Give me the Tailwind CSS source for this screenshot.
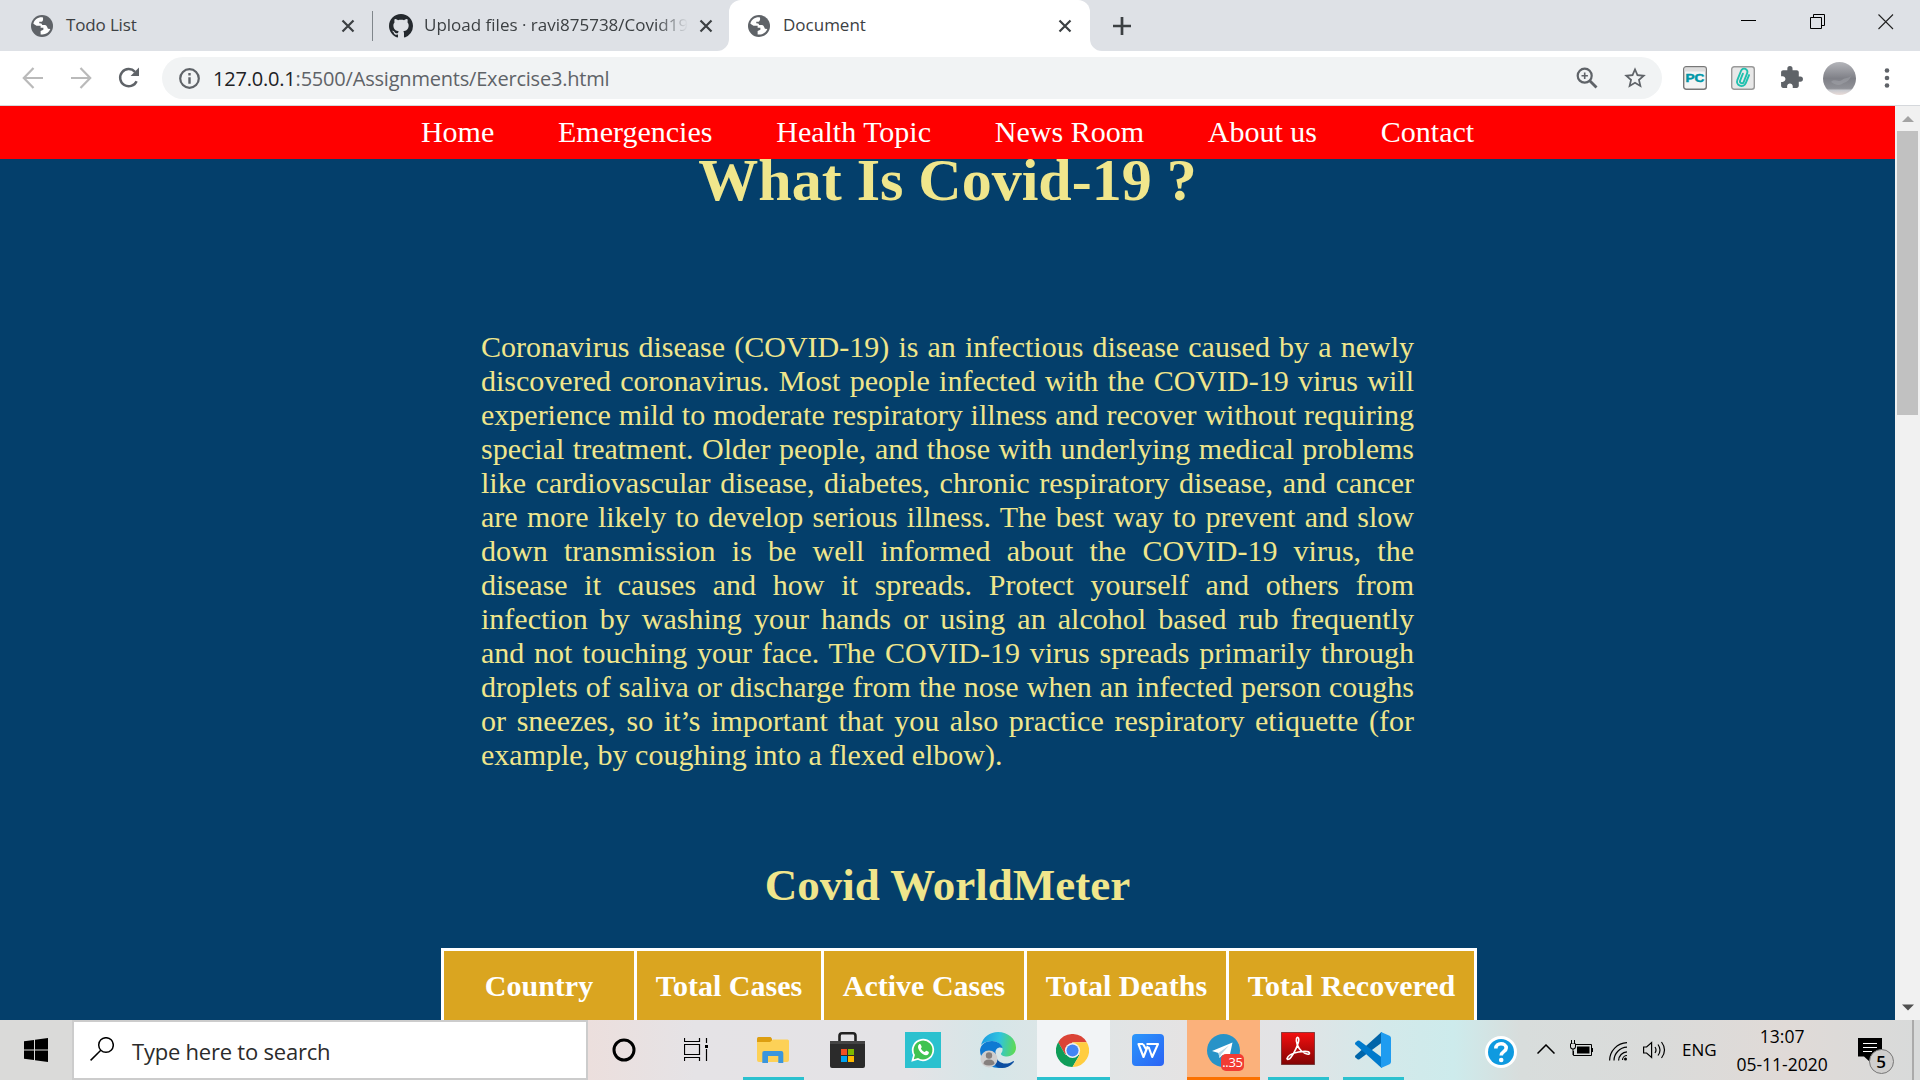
<!DOCTYPE html>
<html lang="en">
<head>
<meta charset="utf-8">
<title>Document</title>
<script src="https://cdn.jsdelivr.net/npm/@tailwindcss/browser@4"></script>
</head>
<body class="w-[1920px] h-[1080px] overflow-hidden flex flex-col bg-white font-['Open_Sans','Noto_Sans',sans-serif]">
<svg class="hidden">
  <symbol id="globe" viewBox="0 0 24 24"><circle cx="12" cy="12" r="12" fill="#5f6368"/><path d="M13 2.600C8 2 3.600 4.800 2.600 9.600L6 11.600h4.500v2.200h3v2.400l-3 1.200v3.800c5 .8 9-1.600 10.600-5.800l-2.600-.4c-1-1.800-1-3.400-3.200-4l-3-.2-1-1.600-2.300-.2V7.400h2.600c1.400-.6 2-2.800 1.400-4.800z" fill="#fff"/></symbol>
  <symbol id="close" viewBox="0 0 14 14"><path d="M1.500 1.500l11 11M12.500 1.500l-11 11" stroke="#3c4043" stroke-width="2.200"/></symbol>
</svg>

<header class="h-[51px] shrink-0 flex bg-[#dee1e6] text-[17px] text-[#3c4043]">
  <div class="w-[373px] flex items-center pl-[31px]">
    <svg class="size-[22px]"><use href="#globe"/></svg>
    <span class="ml-[13px] flex-1 pb-[2px] tracking-[-0.150px]">Todo List</span>
    <svg class="size-[14px] mr-[17px]"><use href="#close"/></svg>
    <div class="w-px h-[30px] bg-[#80868b]"></div>
  </div>
  <div class="w-[356px] flex items-center pl-[16px]">
    <svg class="size-6" viewBox="0 0 16 16" fill="#24292e"><path d="M8 0C3.580 0 0 3.580 0 8c0 3.540 2.290 6.530 5.470 7.590.4.070.55-.17.55-.38 0-.19-.01-.82-.01-1.490-2.010.37-2.530-.49-2.690-.94-.09-.23-.48-.94-.82-1.130-.28-.15-.68-.52-.01-.53.63-.01 1.080.58 1.230.82.72 1.210 1.870.87 2.330.66.070-.52.28-.87.51-1.070-1.780-.2-3.640-.89-3.640-3.950 0-.87.31-1.590.82-2.150-.08-.2-.36-1.020.08-2.120 0 0 .67-.21 2.200.82.64-.18 1.320-.27 2-.27s1.360.09 2 .27c1.530-1.040 2.200-.82 2.200-.82.44 1.100.16 1.920.08 2.120.51.56.82 1.270.82 2.150 0 3.070-1.870 3.750-3.650 3.950.29.25.54.73.54 1.480 0 1.070-.01 1.930-.01 2.200 0 .21.15.46.55.38A8.010 8.010 0 0 0 16 8c0-4.420-3.580-8-8-8z"/></svg>
    <span class="ml-[11px] pb-[2px] w-[264px] overflow-hidden whitespace-nowrap mask-r-from-88% mask-r-to-100%">Upload files · ravi875738/Covid19</span>
    <svg class="size-[14px] ml-[11px]"><use href="#close"/></svg>
  </div>
  <div class="w-[361px] relative flex items-center pl-[19px] bg-white rounded-t-xl">
    <svg class="absolute -left-3 bottom-0 size-3"><path d="M12 0v12H0A12 12 0 0 0 12 0z" fill="#fff"/></svg>
    <svg class="absolute -right-3 bottom-0 size-3"><path d="M0 0v12h12A12 12 0 0 1 0 0z" fill="#fff"/></svg>
    <svg class="size-[22px]"><use href="#globe"/></svg>
    <span class="ml-[13px] flex-1 pb-[2px]">Document</span>
    <svg class="size-[14px] mr-[18px]"><use href="#close"/></svg>
  </div>
  <div class="flex-1 flex items-center pl-[23px]">
    <svg class="size-[18px]" viewBox="0 0 18 18"><path d="M9 0v18M0 9h18" stroke="#3c4043" stroke-width="2.700"/></svg>
    <div class="ml-auto flex items-start gap-[52.500px] pr-[26px] pb-[8px]">
      <svg class="size-[16px]" viewBox="0 0 16 16"><path d="M0 6.500h15" stroke="#000"/></svg>
      <svg class="size-[16px]" viewBox="0 0 16 16" fill="none" stroke="#000"><path d="M.5 3.500h11v11H.5zM3.500 3.500v-3h11v11h-3"/></svg>
      <svg class="size-[16px]" viewBox="0 0 16 16"><path d="M.5.5l14.500 14.500M15 .5L.5 15" stroke="#222" stroke-width="1.100"/></svg>
    </div>
  </div>
</header>

<div class="h-[55px] shrink-0 flex items-center border-b border-[#d5d8dc]">
  <svg class="ml-[22px] size-[22px]" viewBox="0 0 22 22" fill="none" stroke="#bababa" stroke-width="2.200"><path d="M21 11H2M11.500 1L1.800 11l9.700 10"/></svg>
  <svg class="ml-[26px] size-[22px]" viewBox="0 0 22 22" fill="none" stroke="#bababa" stroke-width="2.200"><path d="M1 11h19M10.500 1l9.700 10-9.700 10"/></svg>
  <svg class="ml-[26px] size-[22px]" viewBox="0 0 22 22"><path d="M18.600 14.200A8.600 8.600 0 1 1 17 4.800" fill="none" stroke="#5f6368" stroke-width="2.500"/><path d="M21 .6V9h-8.400z" fill="#5f6368"/></svg>
  <div class="ml-[22px] w-[1500px] h-[42px] rounded-full bg-[#f1f3f4] flex items-center pl-[17px] pr-[14px]">
    <svg class="size-[21px]" viewBox="0 0 21 21"><circle cx="10.500" cy="10.500" r="9.300" fill="none" stroke="#5f6368" stroke-width="2.200"/><path d="M10.500 5v2.400M10.500 9.200v6.600" stroke="#5f6368" stroke-width="2.400"/></svg>
    <span class="ml-[13px] pt-px text-[20px] tracking-[-0.200px] text-[#5f6368] whitespace-nowrap"><span class="text-[#202124]">127.0.0.1</span>:5500/Assignments/Exercise3.html</span>
    <svg class="ml-auto size-[22px]" viewBox="0 0 22 22" fill="none" stroke="#5f6368"><circle cx="8.700" cy="8.700" r="7" stroke-width="2.200"/><path d="M13.500 13.500l7 7" stroke-width="2.800"/><path d="M8.700 5.500v6.400M5.500 8.700h6.400" stroke-width="1.600"/></svg>
    <svg class="ml-[24px] size-[26px]" viewBox="0 0 24 24" fill="#5f6368"><path d="M22 9.240l-7.190-.62L12 2 9.190 8.630 2 9.240l5.460 4.730L5.820 21 12 17.270 18.180 21l-1.630-7.030L22 9.240zM12 15.400l-3.760 2.270 1-4.280-3.320-2.880 4.380-.38L12 6.100l1.710 4.040 4.380.38-3.320 2.880 1 4.280L12 15.400z"/></svg>
  </div>
  <svg class="ml-[21px] size-6" viewBox="0 0 24 24"><rect x=".7" y=".7" width="22.600" height="22.600" rx="2.500" fill="#f4f4f4" stroke="#777" stroke-width="1.400"/><path d="M1.500 1.500h21v4h-21z" fill="#ddd"/><text x="12" y="16" text-anchor="middle" textLength="19" lengthAdjust="spacingAndGlyphs" class="font-['Liberation_Sans',sans-serif] font-bold text-[11.500px]" fill="#0097a7" stroke="#0097a7" stroke-width=".5">PC</text></svg>
  <svg class="ml-6 size-6" viewBox="0 0 24 24"><rect x=".7" y=".7" width="22.600" height="22.600" rx="2.500" fill="#e8e8e8" stroke="#999" stroke-width="1.400"/><g transform="rotate(22 12 12)" fill="none" stroke="#1fc0ae" stroke-width="1.900" stroke-linecap="round"><path d="M16.500 7v8.800a4.500 4.500 0 0 1-9 0V6a3.300 3.300 0 0 1 6.600 0v9.500a1.900 1.900 0 0 1-3.800 0V8"/></g></svg>
  <svg class="ml-[24px] size-[25px] mb-px" viewBox="0 0 24 24" fill="#5f6368"><path d="M20.500 11H19V7c0-1.100-.9-2-2-2h-4V3.500a2.500 2.500 0 0 0-5 0V5H4c-1.100 0-1.990.9-1.990 2v3.800H3.500c1.490 0 2.700 1.210 2.700 2.700s-1.210 2.700-2.700 2.700H2V20c0 1.100.9 2 2 2h3.800v-1.500c0-1.490 1.210-2.700 2.700-2.700s2.700 1.210 2.700 2.700V22H17c1.100 0 2-.9 2-2v-4h1.500a2.500 2.500 0 0 0 0-5z"/></svg>
  <svg class="ml-[19px] size-[33px]" viewBox="0 0 33 33"><defs><linearGradient id="sky" x2="0" y2="1"><stop stop-color="#b4b5ba"/><stop offset=".5" stop-color="#7f8087"/><stop offset=".8" stop-color="#909197"/><stop offset=".86" stop-color="#c9cacf"/><stop offset="1" stop-color="#eadcd8"/></linearGradient></defs><circle cx="16.500" cy="16.500" r="16.500" fill="url(#sky)"/><path d="M8 20c4-4 7 1 11-2s5-1 9-4c-2 6-6 6-9 8s-7 1-11-2z" fill="#a4a5ab" opacity=".5"/></svg>
  <svg class="ml-[28px] w-[6px] h-[20px]" viewBox="0 0 6 20" fill="#5f6368"><circle cx="3" cy="2.500" r="2.300"/><circle cx="3" cy="10" r="2.300"/><circle cx="3" cy="17.500" r="2.300"/></svg>
</div>

<div class="h-[914px] shrink-0 flex">
  <main class="w-[1895px] h-full overflow-hidden bg-[#043f6b] font-['Liberation_Serif',serif] text-[30px] leading-[34px] text-[#f0e68c] flex flex-col items-center">
    <nav class="relative z-10 w-full h-[53px] shrink-0 bg-[#ff0000] text-white flex justify-center items-center gap-[63.800px] pb-[2px]">
      <a>Home</a><a>Emergencies</a><a>Health Topic</a><a>News Room</a><a>About us</a><a>Contact</a>
    </nav>
    <h1 class="-mt-[13px] text-[60px] leading-[68px] font-bold">What Is Covid-19 ?</h1>
    <p class="mt-[116px] w-[933px] text-justify">Coronavirus disease (COVID-19) is an infectious disease caused by a newly discovered coronavirus. Most people infected with the COVID-19 virus will experience mild to moderate respiratory illness and recover without requiring special treatment. Older people, and those with underlying medical problems like cardiovascular disease, diabetes, chronic respiratory disease, and cancer are more likely to develop serious illness. The best way to prevent and slow down transmission is be well informed about the COVID-19 virus, the disease it causes and how it spreads. Protect yourself and others from infection by washing your hands or using an alcohol based rub frequently and not touching your face. The COVID-19 virus spreads primarily through droplets of saliva or discharge from the nose when an infected person coughs or sneezes, so it’s important that you also practice respiratory etiquette (for example, by coughing into a flexed elbow).</p>
    <h2 class="mt-[87px] text-[45px] leading-[52px] font-bold">Covid WorldMeter</h2>
    <div class="ml-[23px] mt-[37px] grid grid-cols-[190px_184px_200px_199px_245px] gap-[3px] border-[3px] border-white bg-white text-white font-bold text-center">
      <div class="h-[90px] pt-[18px] bg-[#daa520]">Country</div>
      <div class="h-[90px] pt-[18px] bg-[#daa520]">Total Cases</div>
      <div class="h-[90px] pt-[18px] bg-[#daa520]">Active Cases</div>
      <div class="h-[90px] pt-[18px] bg-[#daa520]">Total Deaths</div>
      <div class="h-[90px] pt-[18px] bg-[#daa520]">Total Recovered</div>
    </div>
  </main>
  <div class="w-[25px] h-full bg-[#f1f1f1] flex flex-col items-center">
    <svg class="w-3 h-[25px]" viewBox="0 0 12 25"><path d="M0 16l6-6 6 6z" fill="#a3a3a3"/></svg>
    <div class="w-[21px] h-[284px] bg-[#c1c1c1]"></div>
    <svg class="mt-auto w-3 h-[25px]" viewBox="0 0 12 25"><path d="M0 9.500l6 6 6-6z" fill="#505050"/></svg>
  </div>
</div>

<footer class="h-[60px] shrink-0 flex items-center bg-[#dadad9] text-black">
  <div class="w-[72px] flex justify-center"><svg class="size-6" viewBox="0 0 24 24"><path d="M0 3.300L10 1.900v9.600H0zM11 1.700L24 0v11.500H11zM0 12.500h10v9.500L0 20.700zM11 12.500h13V24l-13-1.800z"/></svg></div>
  <div class="w-[516px] h-[60px] bg-white border-2 border-[#cccccc] flex items-center pl-4">
    <svg class="size-6 mb-0.5" viewBox="0 0 24 24" fill="none" stroke="#000" stroke-width="1.500"><circle cx="16" cy="8" r="7.300"/><path d="M10.800 13.200L.6 23.400"/></svg>
    <span class="ml-[18px] pt-[2px] text-[22px] tracking-[-0.220px] text-[#2b2b2b]">Type here to search</span>
  </div>
  <div class="flex-1 h-full flex items-center bg-[linear-gradient(90deg,#ecdfdd_0%,#e5e3e6_8%,#e4e3e6_24%,#d6e6e8_30%,#dfe5e6_37%,#e5e3e3_45%,#e3e3e5_52%,#d3e9ea_60%,#cdebec_65%,#d8dddc_70%,#dadbda_80%,#e0dad7_90%,#d8dada_100%)]">
    <div class="w-[72px] flex justify-center"><svg class="size-6" viewBox="0 0 24 24"><circle cx="12" cy="12" r="10" fill="none" stroke="#000" stroke-width="3"/></svg></div>
    <div class="w-[72px] mr-[5px] flex justify-center"><svg class="size-6" viewBox="0 0 24 24" fill="none" stroke="#000" stroke-width="1.200"><path d="M.5 0v3.500h15V0M.5 6.500h15v10H.5zM.5 23v-3.500h15V23M22.500 0v5M22.500 11v12"/><path d="M21 7h3v3h-3z" fill="#000" stroke="none"/></svg></div>
    <div class="flex gap-[2px] h-full">
      <div class="w-[73px] relative flex items-center justify-center pr-[2px]">
        <svg class="w-8 h-[27px]" viewBox="0 0 32 27"><path d="M0 1.500Q0 0 1.500 0h12L15 1.500V5H0z" fill="#dd9e11"/><path d="M0 5h13l3-2.500h14.500Q32 2.500 32 4v19q0 2-2 2H2q-2 0-2-2z" fill="#fdd157"/><path d="M5.300 26V16q0-2 2-2h17q2 0 2 2v10h-5v-7H11v7z" fill="#3a96dd"/></svg>
        <div class="absolute bottom-0 inset-x-[6px] h-[3px] bg-[#2bc1cf]"></div>
      </div>
      <div class="w-[73px] flex items-center justify-center pr-[2px]">
        <svg class="w-[35px] h-9" viewBox="0 0 35 36"><path d="M9.500 10V4q0-2.700 2.500-2.700h11q2.500 0 2.500 2.700v6" fill="none" stroke="#222" stroke-width="2.600"/><path d="M0 9h35v25q0 2-2 2H2q-2 0-2-2z" fill="#2b2b2b"/><path d="M0 9h35v3H0z" fill="#444"/><path d="M11 17h6v6h-6z" fill="#f25022"/><path d="M18 17h6v6h-6z" fill="#7fba00"/><path d="M11 24h6v6h-6z" fill="#00a4ef"/><path d="M18 24h6v6h-6z" fill="#ffb900"/></svg>
      </div>
      <div class="w-[73px] flex items-center justify-center pr-[2px]">
        <svg class="size-9" viewBox="0 0 36 36"><path d="M0 0h36v36H0z" fill="#2bc1cf"/><path d="M7.500 28.500l1.500-5.500a10.300 10.300 0 1 1 4 4z" fill="#3fc351" stroke="#fff" stroke-width="1.700"/><path d="M14 12.500c.5-.5 1.400-.6 1.800.2l.9 2c.3.700-.9 1.500-.7 2 .8 1.500 2 2.600 3.600 3.200.6.200 1.300-1.400 1.900-1.100l2 1c.8.500.2 2.300-.7 2.900-3.700 2.300-10.600-4.500-9.700-8.700.1-.6.400-1.100.9-1.500z" fill="#fff"/></svg>
      </div>
      <div class="w-[73px] flex items-center justify-center pr-[2px]">
        <svg class="size-9" viewBox="0 0 36 36"><defs><linearGradient id="eg" x1="0" y1=".5" x2="1" y2=".6"><stop offset="0" stop-color="#1b9de2"/><stop offset=".5" stop-color="#2fc3df"/><stop offset="1" stop-color="#5fdb4f"/></linearGradient></defs><path d="M1 13C3 5 10 0 18 0c10 0 18 7 18 15.500C36 21 32 24.500 27 24.500c-4 0-6.500-1.500-6-3 1-1.500 1.800-2.500 1.500-4.500C22 12 17 9 12 9 7 9 3 11 1 13z" fill="url(#eg)"/><path d="M0 18C1 12 6 9 12 9c5 0 10 3 10.500 7-4-2-8 1-7 7 1 6 5 10 10 12C10 39 0 29 0 18z" fill="#0f7ad2"/><path d="M15.500 20c-1 7 5 12.500 12 11.500 3-.5 5-2 6-2.500.8 0 .5 1 0 1.500C29 36 22 37 17 35c-4-3-5-9-1.500-15z" fill="#0d4fa1"/><circle cx="9" cy="27" r="8.500" fill="#cfcfcf"/><circle cx="9" cy="23.500" r="3.200" fill="#85807e"/><path d="M3.500 32q0-4.500 5.500-4.500t5.500 4.500q-5.500 3-11 0z" fill="#85807e"/></svg>
      </div>
      <div class="w-[73px] relative flex items-center justify-center pr-[2px] bg-[#f2f4f6]">
        <svg class="size-[33px]" viewBox="0 0 48 48"><path d="M24 12h20.800A24 24 0 0 0 3.200 12l10.400 18z" fill="#db4437"/><path d="M34.400 30L24 48A24 24 0 0 1 3.200 12l10.400 18z" fill="#0f9d58"/><path d="M34.400 30L24 48a24 24 0 0 0 20.800-36H24z" fill="#ffcd40"/><circle cx="24" cy="24" r="11" fill="#f1f1f1"/><circle cx="24" cy="24" r="8.800" fill="#4285f4"/></svg>
        <div class="absolute bottom-0 inset-x-0 h-[3px] bg-[#2bc1cf]"></div>
      </div>
      <div class="w-[73px] flex items-center justify-center pr-[2px]">
        <svg class="size-8" viewBox="0 0 32 32"><defs><linearGradient id="wp" x2="1" y2="1"><stop stop-color="#2a97fb"/><stop offset="1" stop-color="#2b63f5"/></linearGradient></defs><rect width="32" height="32" rx="4" fill="url(#wp)"/><path d="M11 10H6.500l5 13L15.800 12M11 10l3.500 6M14.500 10H26l-5.800 13L16.600 13" fill="none" stroke="#fff" stroke-width="2.100" stroke-linejoin="round"/></svg>
      </div>
      <div class="w-[73px] relative flex items-center justify-center bg-[#fbb17b]">
        <svg class="size-[33px]" viewBox="0 0 33 33"><circle cx="16.500" cy="16.500" r="16.500" fill="#2793c8"/><path d="M5 17L25.500 8.500 22 25l-6.500-4-3 3-1-5z" fill="#fff"/><path d="M11.500 19L22 11.500l-8 9-1.500 3.500z" fill="#b9d6e6"/></svg>
        <div class="absolute left-[34px] top-[34px] w-[23px] h-[17px] rounded-[5px] bg-[#f23c34] text-white text-[13px] leading-[16px] text-center tracking-[-0.300px]">..35</div>
        <div class="absolute bottom-0 inset-x-0 h-[3px] bg-[#fb7100]"></div>
      </div>
      <div class="w-[73px] relative flex items-center justify-center pr-[2px]">
        <svg class="w-[34px] h-[33px] mb-[3px]" viewBox="0 0 34 33"><defs><linearGradient id="ac" x2="0" y2="1"><stop stop-color="#f40f0f"/><stop offset="1" stop-color="#820404"/></linearGradient></defs><rect x=".5" y=".5" width="33" height="32" fill="url(#ac)" stroke="#4f1010" stroke-opacity=".6"/><path d="M6 26.500c1-3 6-5.500 11.500-6.500 5-1 10.500-1 11 1 .3 2-4 1.500-8-2-3.500-3.300-6-9-5-12.500.7-1.800 2.300-1.500 2.300 1 0 4-4.500 13.500-8 18-1.500 2-3.500 2.500-3.800 1z" fill="none" stroke="#fff" stroke-width="1.600"/></svg>
        <div class="absolute bottom-0 inset-x-[6px] h-[3px] bg-[#2bc1cf]"></div>
      </div>
      <div class="w-[73px] relative flex items-center justify-center pr-[2px]">
        <svg class="size-9" viewBox="0 0 36 36"><path d="M27 0v10.500L4.500 27.300q-1 .6-2 0L.4 25.400q-.8-1 0-2L26 .5z" fill="#0065a9"/><path d="M27 36V25.500L4.500 8.700q-1-.6-2 0L.4 10.600q-.8 1 0 2L26 35.500z" fill="#007acc"/><path d="M26 0l8.500 3.700Q36 4.500 36 6v24q0 1.500-1.500 2.300L26 36z" fill="#1f9cf0"/></svg>
        <div class="absolute bottom-0 inset-x-[6px] h-[3px] bg-[#2bc1cf]"></div>
      </div>
    </div>
    <svg class="ml-[75px] mt-1 size-8" viewBox="0 0 32 32"><circle cx="16" cy="16" r="16" fill="#fff"/><circle cx="16" cy="16" r="13" fill="#0f9ae0"/><path d="M10.800 12.500c0-6.500 10.400-6 10.400-.5 0 3.800-5 3.500-5 7.500" fill="none" stroke="#fff" stroke-width="3.600"/><circle cx="16.200" cy="24" r="2.300" fill="#fff"/></svg>
    <svg class="ml-5 mb-[2px] w-[18px] h-[10px]" viewBox="0 0 18 10"><path d="M.5 9.500L9 1l8.500 8.500" fill="none" stroke="#000" stroke-width="1.500"/></svg>
    <svg class="ml-[14px] mb-[2px] w-6 h-[18px]" viewBox="0 0 24 18"><path d="M6 4.500h16.500v11H4.500V11" fill="none" stroke="#000"/><path d="M8 6.500h12.500v7H8zM23 8h1v4h-1zM1 3.500h6v3a3 3 0 0 1-6 0z"/><path d="M2 4h4v2.500a2 2 0 0 1-4 0z" fill="#dadada"/><path d="M2.500 0v4M5.500 0v4M4 9v6" stroke="#000"/></svg>
    <svg class="ml-4 mt-[3px] w-[19px] h-[19px]" viewBox="0 0 19 19" fill="none" stroke="#000" stroke-width="1.200"><path d="M.6 18.500A18 18 0 0 1 18 .6M5 18.500A13.500 13.500 0 0 1 18 5.200M9.600 18.500A9 9 0 0 1 18 9.800"/><circle cx="16.500" cy="17" r="1.500" fill="#000" stroke="none"/><path d="M13.500 18A4.500 4.500 0 0 1 18 13.500"/></svg>
    <svg class="ml-[15px] w-[23px] h-[18px]" viewBox="0 0 23 18" fill="none" stroke="#000" stroke-width="1.200"><path d="M.6 6v6h3l5 4.500v-15L3.600 6zM12 6q2 3 0 6M15 3.500q4 5.500 0 11M18.500 1q6 8 0 16"/></svg>
    <span class="ml-[16px] text-[17px]">ENG</span>
    <div class="ml-[18px] w-[95px] flex flex-col items-center text-[17.500px] leading-[28px] whitespace-nowrap"><span>13:07</span><span>05-11-2020</span></div>
    <div class="ml-[28px] mt-[11px] relative w-[37px] h-[36px]">
      <svg class="w-[37px] h-9" viewBox="0 0 37 36"><path d="M0 0h24v18.500H12V24l-6-5.500H0z"/><path d="M5 5.500h14M5 9.500h14M5 13.500h9" stroke="#fff" stroke-width="1.200"/><circle cx="23.500" cy="23.500" r="12" fill="#d0cfce" stroke="#777"/></svg>
      <span class="absolute left-[12px] top-[12px] w-[23px] text-center text-[17px] leading-[24px] font-semibold">5</span>
    </div>
    <div class="ml-auto mr-[6px] w-[2px] h-full bg-[#aaa]"></div>
  </div>
</footer>
</body>
</html>
